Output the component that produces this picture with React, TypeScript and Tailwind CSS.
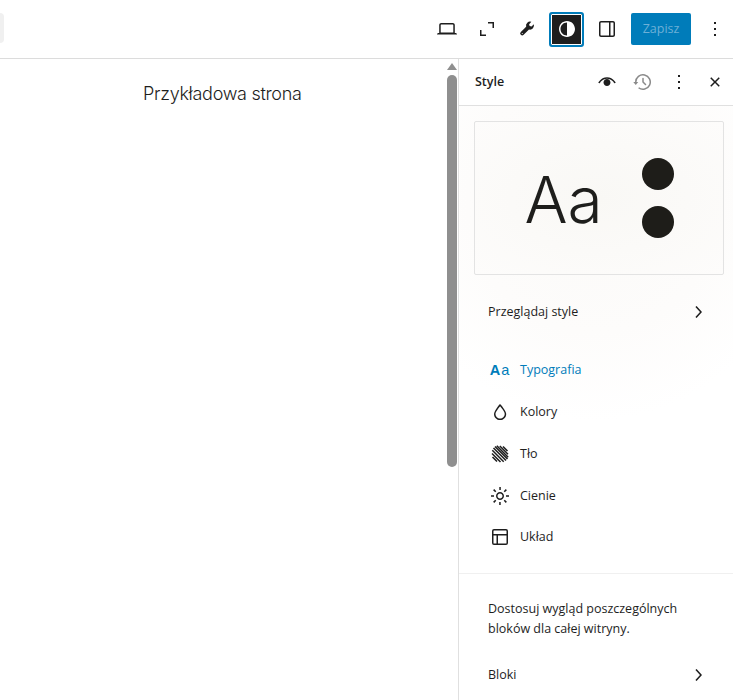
import React from "react";

const Ic = ({ d, size = 24, className = "" }: { d: string; size?: number; className?: string }) => (
  <svg viewBox="0 0 24 24" width={size} height={size} fill="currentColor" className={className}>
    <path d={d} />
  </svg>
);

const laptop = "M20.5 16h-.7V8c0-1.1-.9-2-2-2H6.2c-1.1 0-2 .9-2 2v8h-.7c-.8 0-1.5.7-1.5 1.5h20c0-.8-.7-1.5-1.5-1.5zM5.7 8c0-.3.2-.5.5-.5h11.6c.3 0 .5.2.5.5v7.600H5.700V8z";
const full = "M13 5h6v6h-1.500V6.500H13zM11 19H5v-6h1.500v4.500H11z";
const tool = "M14.103 7.128l2.26-2.26a4 4 0 00-5.207 4.804L5.828 15a2 2 0 102.828 2.828l5.329-5.328a4 4 0 004.804-5.208l-2.261 2.26-1.912-.512-.513-1.912zm-7.214 9.64a.5.5 0 11.707-.707.5.5 0 01-.707.707z";
const styles = "M12 4c-4.4 0-8 3.6-8 8s3.6 8 8 8 8-3.6 8-8-3.6-8-8-8zm0 14.5c-3.6 0-6.5-2.9-6.5-6.5S8.4 5.5 12 5.5v13z";
const drawer = "M18 4H6c-1.1 0-2 .9-2 2v12c0 1.1.9 2 2 2h12c1.1 0 2-.9 2-2V6c0-1.1-.9-2-2-2zm-4 14.5H6c-.3 0-.5-.2-.5-.5V6c0-.3.2-.5.5-.5h8v13zm4.5-.5c0 .3-.2.5-.5.5h-2.5v-13H18c.3 0 .5.2.5.5v12z";
const more = "M13 19h-2v-2h2v2zm0-6h-2v-2h2v2zm0-6h-2V5h2v2z";
const eye = "M3.99961 13C4.67043 13.3354 4.6703 13.3357 4.67017 13.3359L4.67298 13.3305C4.67621 13.3242 4.68184 13.3135 4.68988 13.2985C4.70595 13.2686 4.7316 13.2218 4.76695 13.1608C4.8377 13.0385 4.94692 12.8592 5.09541 12.6419C5.39312 12.2062 5.84436 11.624 6.45435 11.0431C7.67308 9.88241 9.49719 8.75 11.9996 8.75C14.502 8.75 16.3261 9.88241 17.5449 11.0431C18.1549 11.624 18.6061 12.2062 18.9038 12.6419C19.0523 12.8592 19.1615 13.0385 19.2323 13.1608C19.2676 13.2218 19.2933 13.2686 19.3093 13.2985C19.3174 13.3135 19.323 13.3242 19.3262 13.3305L19.3291 13.3359C19.3289 13.3357 19.3288 13.3354 19.9996 13C20.6704 12.6646 20.6703 12.6643 20.6701 12.664L20.6697 12.6632L20.6688 12.6614L20.6662 12.6563L20.6583 12.6408C20.6517 12.6282 20.6427 12.6108 20.631 12.5892C20.6078 12.5459 20.5744 12.4852 20.5306 12.4096C20.4432 12.2584 20.3141 12.0471 20.1423 11.7956C19.7994 11.2938 19.2819 10.626 18.5794 9.9569C17.1731 8.61759 14.9972 7.25 11.9996 7.25C9.00203 7.25 6.82614 8.61759 5.41987 9.9569C4.71736 10.626 4.19984 11.2938 3.85694 11.7956C3.68511 12.0471 3.55605 12.2584 3.4686 12.4096C3.42484 12.4852 3.39142 12.5459 3.36818 12.5892C3.35656 12.6108 3.34748 12.6282 3.34092 12.6408L3.33297 12.6563L3.33041 12.6614L3.32948 12.6632L3.32911 12.664C3.32894 12.6643 3.32879 12.6646 3.99961 13ZM11.9996 16C13.9326 16 15.4996 14.433 15.4996 12.5C15.4996 10.567 13.9326 9 11.9996 9C10.0666 9 8.49961 10.567 8.49961 12.5C8.49961 14.433 10.0666 16 11.9996 16Z";
const backup = "M5.5 12h1.75l-2.5 3-2.5-3H4a8 8 0 113.134 6.35l.907-1.194A6.5 6.5 0 105.5 12zm9.53 1.97l-2.28-2.28V8.5a.75.75 0 00-1.5 0V12a.747.747 0 00.218.529l2.5 2.5a.75.75 0 101.062-1.06z";
const close = "M12 13.06l3.712 3.713 1.061-1.06L13.061 12l3.712-3.712-1.06-1.061L12 10.939 8.288 7.227l-1.061 1.06L10.939 12l-3.712 3.712 1.06 1.061L12 13.061z";
const chev = "M10.6 6L9.4 7l4.6 5-4.6 5 1.2 1 5.4-6z";
const drop = "M17.2 10.9c-.5-1-1.2-2.1-2.1-3.2-.6-.9-1.3-1.7-2.1-2.6L12 4l-1 1.1c-.6.9-1.3 1.7-2 2.6-.8 1.2-1.5 2.3-2 3.2-.6 1.2-1 2.2-1 3 0 3.4 2.7 6.1 6.1 6.1s6.1-2.7 6.1-6.1c0-.8-.3-1.8-1-3zm-5.1 7.6c-2.5 0-4.6-2.1-4.6-4.6 0-.3.1-1 .8-2.3.5-.9 1.1-1.9 2-3.1.7-.9 1.3-1.7 1.8-2.3.7.8 1.3 1.6 1.8 2.3.8 1.1 1.5 2.2 2 3.1.7 1.3.8 2 .8 2.3 0 2.5-2.1 4.6-4.6 4.6z";
const shadow = "M12 8c-2.2 0-4 1.8-4 4s1.8 4 4 4 4-1.8 4-4-1.8-4-4-4zm0 6.5c-1.4 0-2.5-1.1-2.5-2.5s1.1-2.5 2.5-2.5 2.5 1.1 2.5 2.5-1.1 2.5-2.5 2.5zM12.8 3h-1.5v3h1.5V3zm-1.6 18h1.5v-3h-1.5v3zm6.8-9.8v1.5h3v-1.5h-3zm-12 0H3v1.5h3v-1.5zm9.7 5.6 2.1 2.1 1.1-1.1-2.1-2.1-1.1 1.1zM8.3 7.2 6.2 5.1 5.1 6.2l2.1 2.1 1.1-1.1zM5.1 17.8l1.1 1.1 2.1-2.1-1.1-1.1-2.1 2.1zM18.9 6.2l-1.1-1.1-2.1 2.1 1.1 1.1 2.1-2.1z";
const layout = "M18 5.5H6a.5.5 0 0 0-.5.5v3h13V6a.5.5 0 0 0-.5-.5zm.5 5H10v8h8a.5.5 0 0 0 .5-.5v-7.5zm-10 0h-3V18a.5.5 0 0 0 .5.5h2.5v-8zM6 4h12a2 2 0 0 1 2 2v12a2 2 0 0 1-2 2H6a2 2 0 0 1-2-2V6a2 2 0 0 1 2-2z";

const Hatch = () => (
  <svg viewBox="0 0 24 24" width={24} height={24} fill="none" stroke="currentColor" strokeWidth={1.5}>
    <path d="M4.5 15 9 19.500M4 11.500 12.500 20M4.300 8.300 15.700 19.700M5.500 6 18 18.500M7 4.500 19.500 17M8.800 3.800 20.200 15.200M11.800 4 20 12.200M15 4.500 19.500 9" />
  </svg>
);

const NavRow = ({ icon, label, active = false, last = false }: { icon: React.ReactNode; label: string; active?: boolean; last?: boolean }) => (
  <div className={`flex items-center gap-[8px] pl-[29px] ${last ? "h-[40px]" : "h-[42px]"} ${active ? "text-[#007cba]" : "text-[#1e1e1e]"}`}>
    <div className="flex w-[24px] justify-center">{icon}</div>
    <span>{label}</span>
  </div>
);

export default function App() {
  return (
    <div className="flex h-[700px] w-[733px] flex-col overflow-hidden bg-white text-[12.5px] text-[#1e1e1e] [font-family:'Open_Sans','Noto_Sans',sans-serif]">
      <header className="flex h-[59px] shrink-0 items-center justify-between border-b border-[#dcdcdc] pr-[6px]">
        <div className="mb-[2px] h-[30px] w-[4px] rounded-r-[4px] bg-[#f0f0f0]" />
        <div className="flex items-center">
          <div className="flex w-[24px] justify-center"><Ic d={laptop} /></div>
          <div className="ml-[16px] flex w-[24px] justify-center"><Ic d={full} /></div>
          <div className="ml-[16px] flex w-[24px] justify-center"><Ic d={tool} /></div>
          <div className="ml-[10px] flex h-[35px] w-[35px] items-center justify-center rounded-[3px] border-[2px] border-[#007cba] bg-[#1e1e1e] text-white outline outline-1 -outline-offset-[3px] outline-white">
            <Ic d={styles} />
          </div>
          <div className="ml-[11px] flex w-[24px] justify-center"><Ic d={drawer} /></div>
          <div className="ml-[12px] flex h-[32px] w-[60px] items-center justify-center rounded-[2px] bg-[#007cba] text-[#6db0d7]">Zapisz</div>
          <div className="ml-[12px] flex w-[24px] justify-center"><Ic d={more} /></div>
        </div>
      </header>
      <div className="flex min-h-0 flex-1">
        <main className="relative min-w-0 flex-1">
          <p className="pt-[23px] pl-[143px] text-[18px] leading-[24px] font-light tracking-[-0.3px] text-[#1e1e1c] [font-family:'Inter',sans-serif]">Przykładowa strona</p>
          <div className="absolute top-0 right-0 h-full w-[12px]">
            <div className="absolute top-[4px] left-[1px] h-0 w-0 border-x-[5px] border-b-[7px] border-x-transparent border-b-[#8f8f8f]" />
            <div className="absolute top-[16px] left-[1px] h-[392px] w-[10px] rounded-full bg-[#8f8f8f]" />
          </div>
        </main>
        <aside className="flex w-[275px] shrink-0 flex-col border-l border-[#e0e0e0]">
          <div className="flex h-[47px] shrink-0 items-center border-b border-[#e0e0e0] pl-[16px]">
            <span className="mt-[1px] flex-1 font-semibold">Style</span>
            <Ic d={eye} className="mr-[12px]" />
            <Ic d={backup} className="mr-[12px] text-[#8a8a8a]" />
            <Ic d={more} className="mr-[12px]" />
            <Ic d={close} className="mr-[6px]" />
          </div>
          <div className="flex-1 bg-[radial-gradient(ellipse_210px_220px_at_135px_95px,#fbfaf8_0%,#fdfcfb_60%,#ffffff_100%)]">
            <div className="mt-[15px] mr-[9px] ml-[15px] flex h-[154px] items-center justify-center rounded-[2px] border border-[#e3e3e3] bg-[radial-gradient(ellipse_at_center,#f9f8f5_0%,#fdfcfb_100%)]">
              <span className="pt-[4px] text-[64px] leading-none font-light text-[#1e1e1c] [font-family:'Inter',sans-serif]">Aa</span>
              <div className="ml-[39px] flex flex-col gap-[16px]">
                <div className="h-[32px] w-[32px] rounded-full bg-[#1e1d19]" />
                <div className="h-[32px] w-[32px] rounded-full bg-[#1e1d19]" />
              </div>
            </div>
            <div className="mt-[15px] flex h-[44px] items-center justify-between pr-[23px] pl-[29px]">
              <span>Przeglądaj style</span>
              <Ic d={chev} />
            </div>
            <div className="mt-[15px]">
              <NavRow active label="Typografia" icon={<span className="text-[14.5px] leading-none tracking-[1px] [font-family:'Liberation_Sans',sans-serif]"><b>A</b>a</span>} />
              <NavRow label="Kolory" icon={<Ic d={drop} />} />
              <NavRow label="Tło" icon={<Hatch />} />
              <NavRow label="Cienie" icon={<Ic d={shadow} />} />
              <NavRow last label="Układ" icon={<Ic d={layout} />} />
            </div>
            <div className="mt-[16px] border-t border-[#f0f0f0] pt-[25px] pl-[29px] leading-[20px]">
              Dostosuj wygląd poszczególnych<br />bloków dla całej witryny.
            </div>
            <div className="mt-[14px] flex h-[44px] items-center justify-between pr-[23px] pl-[29px]">
              <span>Bloki</span>
              <Ic d={chev} />
            </div>
          </div>
        </aside>
      </div>
    </div>
  );
}
